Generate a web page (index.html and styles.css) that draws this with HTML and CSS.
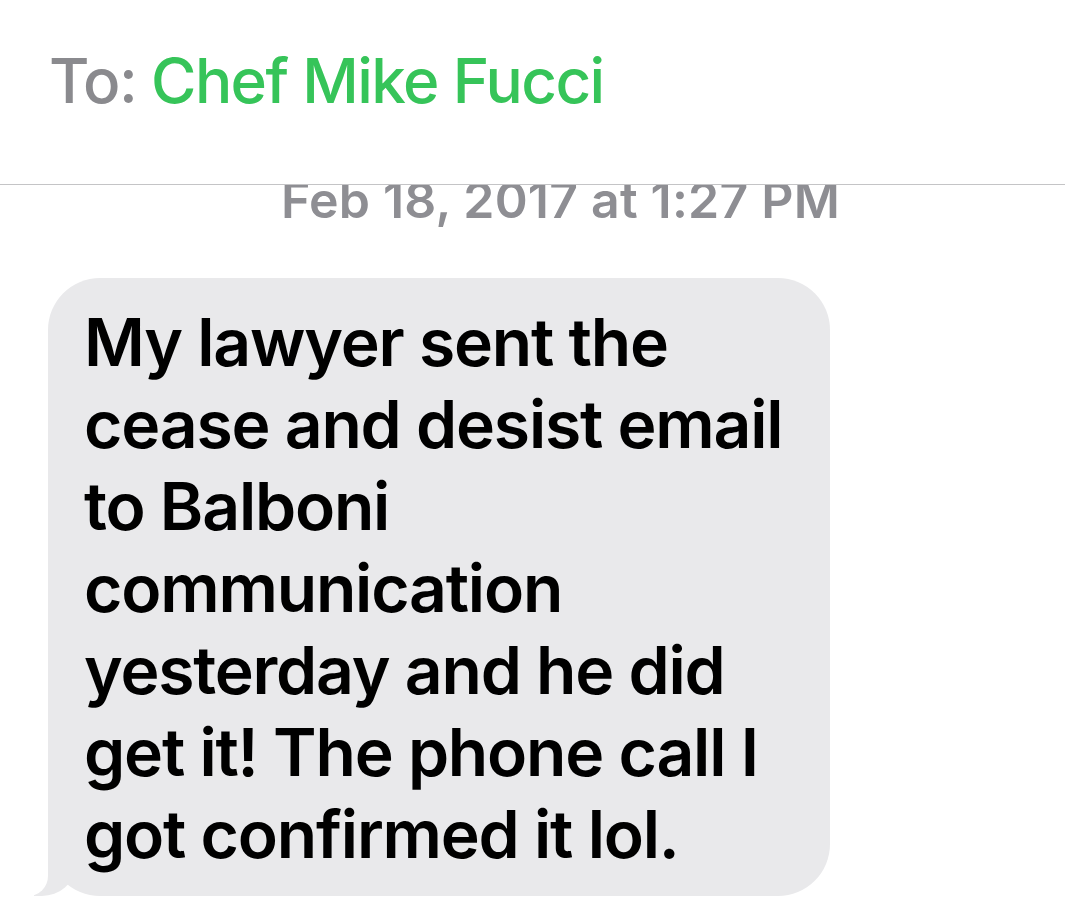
FILE: index.html
```html
<!DOCTYPE html>
<html lang="en">

<head>
    <meta charset="UTF-8">
    <meta name="viewport" content="width=device-width, initial-scale=1.0">
    <title>Chef Mike Fucci</title>
    <link rel="stylesheet" href="styles.css">
</head>

<body>
    <div class="thread">
        <div class="thread-header">
            <span class="to-label">To:</span>
            <span class="to-name">Chef Mike Fucci</span>
        </div>

        <div class="timestamp">Feb 18, 2017 at 1:27 PM</div>

        <div class="message-row">
            <div class="bubble incoming">
                My lawyer sent the cease and desist email to Balboni communication yesterday and he did get it! The phone call I got confirmed it lol.
            </div>
        </div>
    </div>
</body>

</html>
```

FILE: styles.css
```css
body {
    margin: 0;
    padding: 0;
    background-color: #fff;
    font-family: Inter, "Noto Sans", sans-serif;
    overflow: hidden;
}

.thread {
    width: 1065px;
    height: 900px;
}

.thread-header {
    position: relative;
    z-index: 1;
    background: #fff;
    height: 140px;
    padding: 44px 0 0 49px;
    border-bottom: 1px solid #c4c4c6;
    font-size: 62px;
    line-height: 74px;
    font-weight: 500;
    letter-spacing: -1.6px;
}

.to-label {
    color: #8a8a8e;
}

.to-name {
    color: #36c459;
}

.timestamp {
    margin-top: -15px;
    padding-left: 281px;
    font-size: 50px;
    line-height: 60px;
    font-weight: 600;
    color: #8e8e93;
    letter-spacing: 0.2px;
}

.message-row {
    margin-top: 48px;
    padding-left: 48px;
}

.bubble {
    position: relative;
    box-sizing: border-box;
    width: 782px;
    padding: 23px 36px 21px 36px;
    border-radius: 52px;
    font-size: 66px;
    line-height: 82px;
    font-weight: 600;
    letter-spacing: -1.2px;
    color: #000;
}

.bubble.incoming {
    background: #e9e9eb;
}

/* tail */
.bubble.incoming::before {
    content: "";
    position: absolute;
    bottom: 0;
    left: -14px;
    width: 40px;
    height: 50px;
    background: #e9e9eb;
    border-bottom-right-radius: 32px 28px;
}

.bubble.incoming::after {
    content: "";
    position: absolute;
    bottom: 0;
    left: -52px;
    width: 52px;
    height: 50px;
    background: #fff;
    border-bottom-right-radius: 20px;
}
```
